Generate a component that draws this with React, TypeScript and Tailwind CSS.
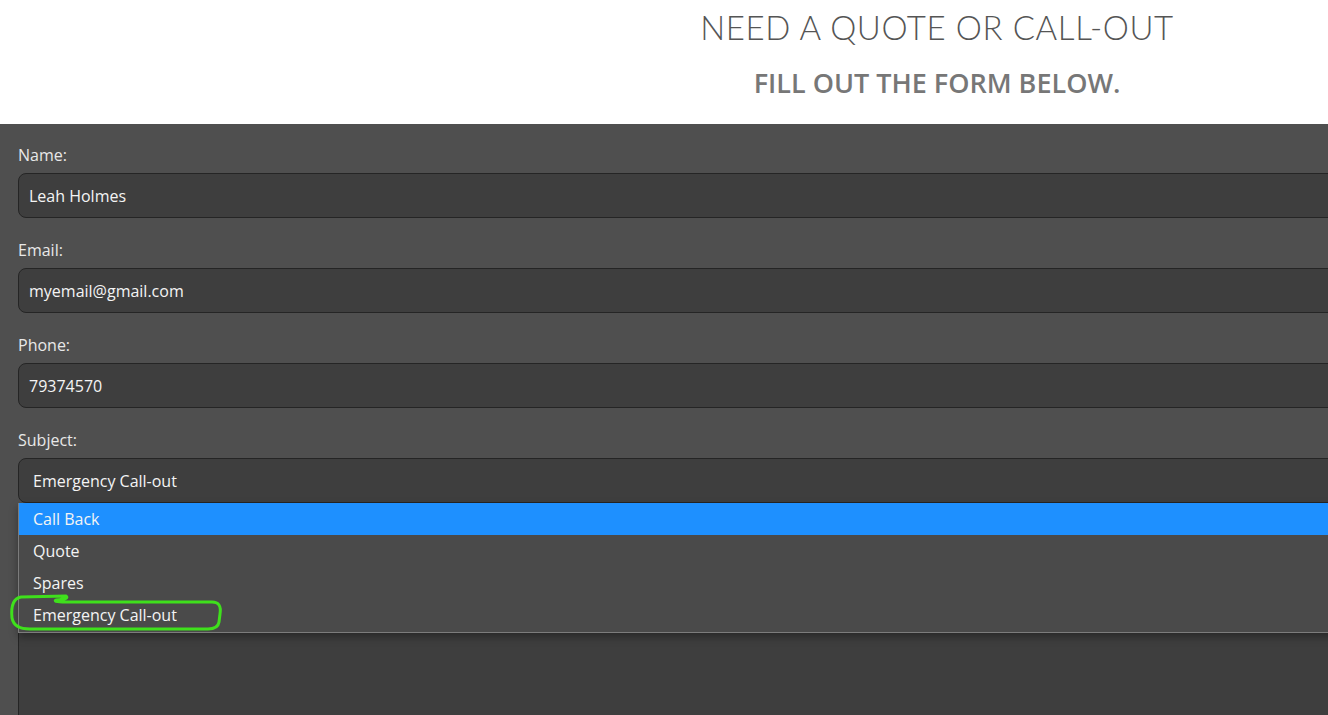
import React from 'react';

const fields = [
  { label: 'Name:', value: 'Leah Holmes' },
  { label: 'Email:', value: 'myemail@gmail.com' },
  { label: 'Phone:', value: '79374570' },
];

const options = ['Call Back', 'Quote', 'Spares', 'Emergency Call-out'];

export default function App() {
  return (
    <div className="relative h-[715px] overflow-hidden bg-white font-['Open_Sans',sans-serif]">
      {/* Heading */}
      <header className="flex h-[124px]">
        <div className="ml-[546px] flex flex-1 flex-col items-center">
          <h1 className="mt-[6px] font-['Lato',sans-serif] text-[33px] font-light leading-[42px] tracking-[0.6px] text-[#555]">
            NEED A QUOTE OR CALL-OUT
          </h1>
          <h2 className="mt-[19px] text-[27px] font-semibold leading-[32px] text-[#777]">
            FILL OUT THE FORM BELOW.
          </h2>
        </div>
      </header>

      {/* Form */}
      <form className="h-full bg-[#4f4f4f] pl-[18px] pt-[19px] text-[16px]">
        {fields.map((f) => (
          <div key={f.label} className="mb-[20px]">
            <label className="block h-[24px] leading-[24px] text-[#e8e8e8]">{f.label}</label>
            <div className="mt-[6px] flex h-[45px] w-[1360px] items-center rounded-[8px] border border-[#252525] bg-[#3e3e3e] pl-[10px] text-[#f4f4f4]">
              {f.value}
            </div>
          </div>
        ))}

        <div className="relative">
          <label className="block h-[24px] leading-[24px] text-[#e8e8e8]">Subject:</label>
          <div className="mt-[6px] flex h-[45px] w-[1360px] items-center rounded-[8px] border border-[#252525] bg-[#3e3e3e] pl-[14px] text-[#f4f4f4]">
            Emergency Call-out
          </div>

          {/* Open dropdown */}
          <ul className="absolute left-0 top-[75px] z-10 w-[1360px] border-b border-l border-[#7c7c7c] bg-[#4a4a4a] pb-[1px] shadow-[0_4px_8px_rgba(0,0,0,0.35)]">
            {options.map((o, i) => (
              <li
                key={o}
                className={`flex h-[32px] items-center pl-[14px] text-[#f4f4f4] ${
                  i === 0 ? 'bg-[#1e90ff]' : ''
                }`}
              >
                {o}
              </li>
            ))}
          </ul>

          {/* Message box, mostly hidden behind the open list */}
          <div className="mt-[50px] h-[200px] w-[1360px] rounded-[8px] border border-[#252525] bg-[#3e3e3e]" />
        </div>
      </form>

      {/* Hand-drawn highlight */}
      <svg className="pointer-events-none absolute left-0 top-0 z-20" width="1328" height="715">
        <path
          d="M12 618 Q10 599 21 597 L66 596 Q70 599 56 600 Q52 602 70 602 L212 602 Q222 602 220 614 L219 622 Q218 629 208 629 L30 629 Q14 629 12 618"
          fill="none"
          stroke="#3fe01c"
          strokeWidth="3"
          strokeLinecap="round"
          strokeLinejoin="round"
        />
      </svg>
    </div>
  );
}
